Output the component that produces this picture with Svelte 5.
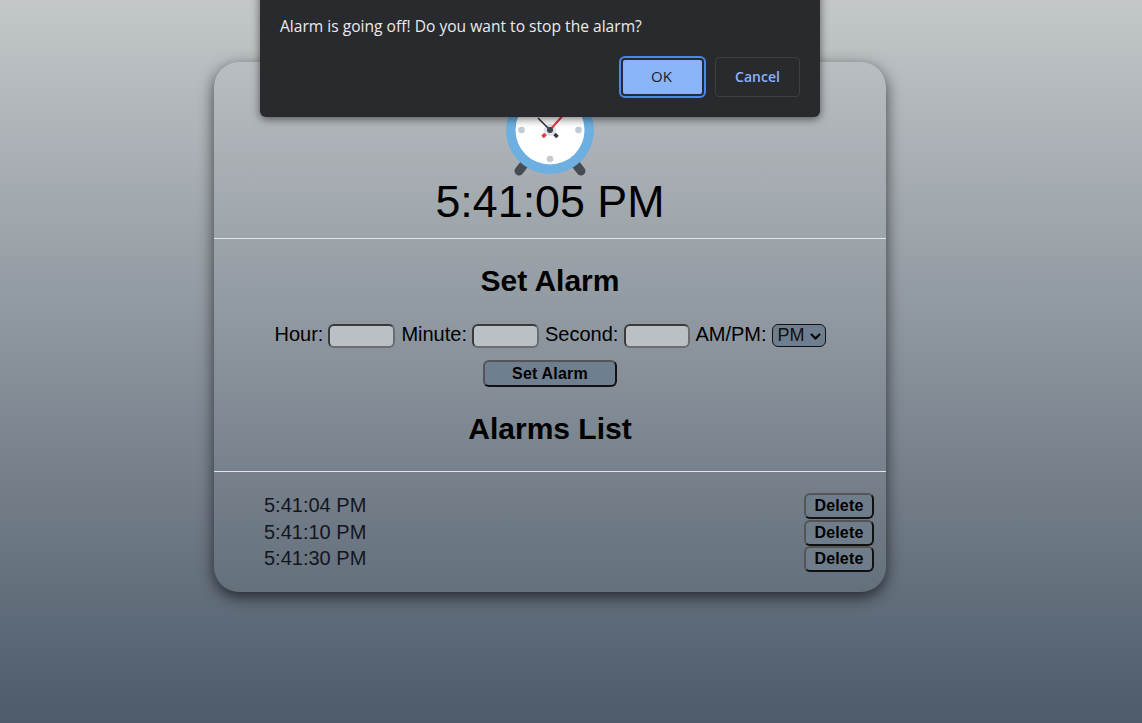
<script>
  const alarms = ['5:41:04 PM', '5:41:10 PM', '5:41:30 PM'];
</script>

<div class="page">
  <main class="card">
    <section class="clock">
      <svg class="icon" width="96" height="96" viewBox="0 0 96 96" aria-hidden="true">
        <path class="foot" d="M24 78 L17 87 M72 78 L79 87" />
        <circle cx="48" cy="46" r="44" fill="#6cafe0" />
        <circle cx="48" cy="46" r="34.5" fill="#fff" />
        <circle cx="19.500" cy="46" r="3.3" fill="#c3cbd3" />
        <circle cx="76.500" cy="46" r="3.3" fill="#c3cbd3" />
        <circle cx="48" cy="75" r="3.3" fill="#c3cbd3" />
        <circle cx="48" cy="46" r="6" fill="#dde2e7" />
        <path class="hand-black" d="M48 46 L36 34" />
        <path class="hand-red" d="M48 46 L63 29" />
        <path class="tail-red" d="M43.500 50 L40.500 53" />
        <path class="tail-black" d="M52.500 50 L55.500 53" />
        <circle cx="48" cy="46" r="3" fill="#3d434a" />
      </svg>
      <div class="time">5:41:05 PM</div>
    </section>
    <hr />
    <section class="setter">
      <h2>Set Alarm</h2>
      <form class="fields" onsubmit={(e) => e.preventDefault()}>
        <label for="h">Hour:</label>
        <input id="h" />
        <label class="minute" for="m">Minute:</label>
        <input id="m" />
        <label class="second" for="s">Second:</label>
        <input class="second-input" id="s" />
        <label for="a">AM/PM:</label>
        <select id="a"><option>PM</option><option>AM</option></select>
      </form>
      <button class="set">Set Alarm</button>
      <h2 class="list-title">Alarms List</h2>
    </section>
    <hr />
    <ul>
      {#each alarms as a}
        <li><span class="entry">{a}</span><button class="del">Delete</button></li>
      {/each}
    </ul>
  </main>

  <div class="dialog" role="alertdialog">
    <p>Alarm is going off! Do you want to stop the alarm?</p>
    <div class="actions">
      <button class="ok">OK</button>
      <button class="cancel">Cancel</button>
    </div>
  </div>
</div>

<style>
  :global(body) {
    margin: 0;
    background: #4d5b6a;
  }
  .page {
    position: relative;
    height: 723px;
    padding-top: 62px;
    box-sizing: border-box;
    overflow: hidden;
    background: linear-gradient(to bottom, #c3c7c9 0%, #4d5b6a 100%);
    font-family: "Liberation Sans", Arial, sans-serif;
    color: #000;
  }
  .card {
    width: 672px;
    height: 530px;
    margin-left: 214px;
    border-radius: 25px;
    box-sizing: border-box;
    background: rgba(255, 255, 255, 0.01);
    box-shadow: 0 5px 15px rgba(0, 0, 0, 0.65);
    padding-top: 22px;
  }
  .clock {
    display: flex;
    flex-direction: column;
    align-items: center;
  }
  .icon {
    display: block;
  }
  .foot {
    stroke: #454c53;
    stroke-width: 9;
    stroke-linecap: round;
    fill: none;
  }
  .hand-black {
    stroke: #33383e;
    stroke-width: 1.6;
  }
  .hand-red {
    stroke: #e0393e;
    stroke-width: 2;
  }
  .tail-red {
    stroke: #e0393e;
    stroke-width: 3.5;
  }
  .tail-black {
    stroke: #33383e;
    stroke-width: 3.5;
  }
  .time {
    line-height: 46px;
    font-size: 44.8px;
    margin-bottom: 14px;
    margin-top: -2px;
  }
  hr {
    margin: 0;
    border: 0;
    height: 1px;
    background: #e4e6e8;
  }
  .setter {
    text-align: center;
    height: 232px;
  }
  h2 {
    margin: 0;
    font-size: 30px;
    line-height: 34px;
    padding-top: 25px;
  }
  .fields {
    display: flex;
    justify-content: center;
    align-items: center;
    gap: 5px;
    margin-top: 24px;
    font-size: 20px;
    height: 24px;
  }
  .minute {
    margin-left: 1px;
  }
  .second {
    margin-left: 1px;
  }
  input {
    width: 67px;
    height: 24px;
    box-sizing: border-box;
    border: 2px solid;
    border-color: #3a3a3a #6d6d6d #6d6d6d #3a3a3a;
    border-radius: 6px;
    background: #bbc0c4;
    padding: 0;
    margin: 4px 0 0;
  }
  .second-input {
    width: 66px;
    margin-left: 1px;
  }
  select {
    appearance: none;
    width: 54px;
    height: 23px;
    margin-top: 2px;
    font: 18px "Liberation Sans", Arial, sans-serif;
    color: #111;
    background-color: #6e7e8e;
    background-image: url("data:image/svg+xml,%3Csvg xmlns='http://www.w3.org/2000/svg' width='11' height='7' viewBox='0 0 11 7'%3E%3Cpath d='M1 1l4.500 4.500L10 1' fill='none' stroke='%23000' stroke-width='2.200'/%3E%3C/svg%3E");
    background-repeat: no-repeat;
    background-position: 37px 8px;
    border: 1px solid #111;
    border-radius: 6px;
    padding: 0 0 0 5px;
  }
  .set {
    display: block;
    margin: 14px auto 0;
    width: 134px;
    height: 27px;
    box-sizing: border-box;
    font: bold 16px "Liberation Sans", Arial, sans-serif;
    letter-spacing: 0.2px;
    background: #6f7f8f;
    border: 2px solid;
    border-color: #555 #111 #111 #555;
    border-radius: 6px;
    padding: 0;
    color: #000;
  }
  .list-title {
    padding-top: 25px;
  }
  ul {
    list-style: none;
    margin: 0;
    padding: 21px 12px 0 50px;
  }
  li {
    display: flex;
    justify-content: space-between;
    align-items: center;
    height: 26.5px;
    font-size: 20px;
    color: #15151f;
  }
  .entry {
    padding-bottom: 1px;
  }
  .del {
    width: 70px;
    height: 26px;
    box-sizing: border-box;
    font: bold 16px "Liberation Sans", Arial, sans-serif;
    letter-spacing: 0.2px;
    background: #6f7d8b;
    border: 2px solid;
    border-color: #555 #111 #111 #555;
    border-radius: 6px;
    padding: 0;
    color: #000;
  }
  .dialog {
    position: absolute;
    left: 260px;
    top: -10px;
    width: 560px;
    height: 127px;
    box-sizing: border-box;
    background: #292a2d;
    border-radius: 0 0 6px 6px;
    box-shadow: 0 2px 8px rgba(0, 0, 0, 0.55);
    padding: 0 20px;
    font-family: "Open Sans", "Noto Sans", sans-serif;
  }
  .dialog p {
    margin: 0;
    padding-top: 26px;
    font-size: 15.600px;
    line-height: 20px;
    color: #e8eaed;
  }
  .actions {
    display: flex;
    justify-content: flex-end;
    align-items: center;
    gap: 11px;
    margin-top: 21px;
    height: 40px;
  }
  .actions button {
    box-sizing: border-box;
    border-radius: 4px;
    font: 600 14px "Open Sans", "Noto Sans", sans-serif;
    padding: 0 0 2px;
  }
  .ok {
    width: 83px;
    height: 38px;
    background: #8ab4f8;
    color: #1f2023;
    font-size: 15px !important;
    font-weight: 400 !important;
    padding-right: 2px !important;
    border: 2px solid #292a2d;
    outline: 2px solid #4b86ed;
    outline-offset: 0;
  }
  .cancel {
    width: 85px;
    height: 40px;
    background: #292a2d;
    color: #8ab4f8;
    border: 1px solid #3c4043;
  }
</style>
